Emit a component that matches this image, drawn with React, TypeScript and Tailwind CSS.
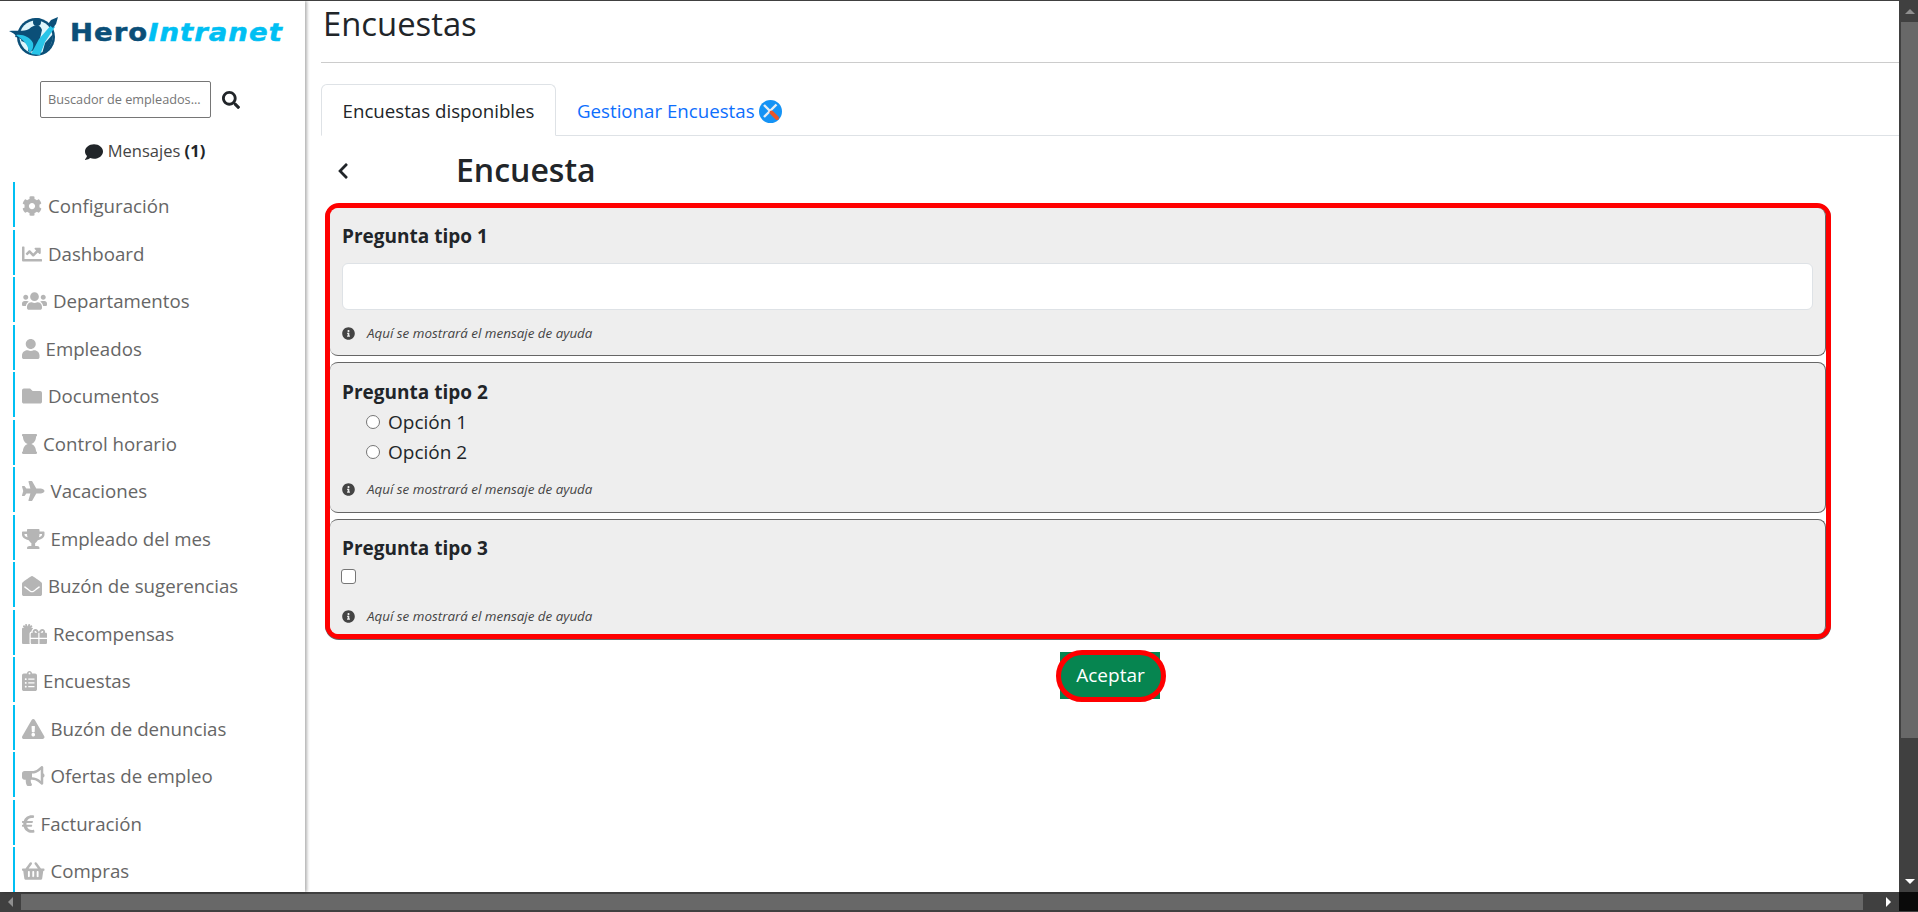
import type { IconType } from 'react-icons';
import {
  FaBullhorn, FaChartLine, FaChevronLeft, FaClipboardList, FaCog, FaComment, FaEnvelopeOpen, FaEuroSign,
  FaExclamationTriangle, FaFolder, FaGifts, FaHourglass, FaInfoCircle, FaPlane, FaSearch, FaShoppingBasket,
  FaTrophy, FaUser, FaUsers,
} from 'react-icons/fa';

const menu: { label: string; icon: IconType; width: string }[] = [
  { label: 'Configuración', icon: FaCog, width: 'w-[20px]' },
  { label: 'Dashboard', icon: FaChartLine, width: 'w-[20px]' },
  { label: 'Departamentos', icon: FaUsers, width: 'w-[25px]' },
  { label: 'Empleados', icon: FaUser, width: 'w-[17.5px]' },
  { label: 'Documentos', icon: FaFolder, width: 'w-[20px]' },
  { label: 'Control horario', icon: FaHourglass, width: 'w-[15px]' },
  { label: 'Vacaciones', icon: FaPlane, width: 'w-[22.5px]' },
  { label: 'Empleado del mes', icon: FaTrophy, width: 'w-[22.5px]' },
  { label: 'Buzón de sugerencias', icon: FaEnvelopeOpen, width: 'w-[20px]' },
  { label: 'Recompensas', icon: FaGifts, width: 'w-[25px]' },
  { label: 'Encuestas', icon: FaClipboardList, width: 'w-[15px]' },
  { label: 'Buzón de denuncias', icon: FaExclamationTriangle, width: 'w-[22.5px]' },
  { label: 'Ofertas de empleo', icon: FaBullhorn, width: 'w-[22.5px]' },
  { label: 'Facturación', icon: FaEuroSign, width: 'w-[12.5px]' },
  { label: 'Compras', icon: FaShoppingBasket, width: 'w-[22.5px]' },
];

function Logo() {
  return (
    <svg width="50" height="42" viewBox="0 0 50 42" className="shrink-0">
      <circle cx="27" cy="22" r="19" fill="#0b4f78" />
      <circle cx="27" cy="22" r="16.5" fill="#dff5fb" />
      <path d="M0 16 C8 15 14 17 20 14 C26 9 31 9 33 15 L30 28 C27 35 22 38 19 36 C21 31 17 27 12 26 C14 25 10 22 6 22 C8 20 4 18 0 16Z" fill="#0b4f78" />
      <path d="M7 20 C14 19 21 22 24 28 C25 33 23 36 20 38 C20 31 15 25 7 20Z" fill="#28c4e8" />
      <path d="M22 39 L30 24 L43 9 L46 12 L36 27 L31 40Z" fill="#28c4e8" />
      <path d="M36 28 L44 19 C44 28 40 35 33 39Z" fill="#0b4f78" />
      <path d="M42 5 L49 2 L47 9 L44 13 L39 9Z" fill="#0b4f78" />
      <circle cx="28" cy="7" r="4" fill="#0b4f78" />
    </svg>
  );
}

function ToolsIcon() {
  return (
    <svg width="23" height="23" viewBox="0 0 23 23" className="shrink-0">
      <circle cx="11.5" cy="11.5" r="11.5" fill="#1593f5" />
      <path d="M5 5 L17 17" stroke="#e6eef5" strokeWidth="2.4" />
      <path d="M17.5 4.5 L5 17" stroke="#e6eef5" strokeWidth="2.4" />
      <path d="M12.5 12.5 L18 18" stroke="#e8562a" strokeWidth="4" strokeLinecap="round" />
    </svg>
  );
}

function HelpText() {
  return (
    <div className="flex items-center gap-[12px] text-[13.4px] italic leading-[18px] text-[#444]">
      <FaInfoCircle className="h-[13px] w-[13px] text-[#444]" />
      <span>Aquí se mostrará el mensaje de ayuda</span>
    </div>
  );
}

function Sidebar() {
  return (
    <aside className="z-10 flex w-[305px] shrink-0 flex-col overflow-hidden bg-white shadow-[2px_0_3px_rgba(0,0,0,0.3)]">
      <div className="flex h-[60px] items-start pl-[9px] pt-[14px]">
        <Logo />
        <span className="ml-[11px] mt-[2px] origin-left scale-x-[1.145] whitespace-nowrap text-[24px] font-bold leading-[32px] tracking-[0.9px] [-webkit-text-stroke:0.5px] [font-family:'DejaVu_Sans',sans-serif]">
          <span className="text-[#0b4f78]">Hero</span>
          <span className="italic text-[#00bff3]">Intranet</span>
        </span>
      </div>
      <div className="mt-[20px] flex items-center pl-[40px]">
        <div className="flex h-[37px] w-[171px] items-center rounded-[2px] border border-[#767676] pl-[7px] pt-[1px] text-[12.7px] text-[#757575]">
          Buscador de empleados...
        </div>
        <FaSearch className="ml-[11px] h-[18px] w-[18px] text-[#212529]" />
      </div>
      <div className="mt-[20px] flex h-[27px] items-center justify-center pr-[15px] text-[16.5px] text-[#444]">
        <FaComment className="mr-[5px] h-[18px] w-[18px] text-[#212529]" />
        <span>Mensajes&nbsp;</span>
        <span className="font-bold text-[#212529]">(1)</span>
      </div>
      <nav className="mt-[17px] flex flex-col gap-[2.5px] pl-[13px]">
        {menu.map((item) => {
          const Icon = item.icon;
          return (
            <div key={item.label} className="flex h-[45px] shrink-0 items-center gap-[6px] border-l-2 border-[#00bff3] pl-[7px] pt-[3px] text-[18.7px] text-[#666]">
              <Icon className={`h-[20px] shrink-0 text-[#b5b5b5] ${item.width}`} />
              <span className="whitespace-nowrap pt-[1px]">{item.label}</span>
            </div>
          );
        })}
      </nav>
    </aside>
  );
}

function Content() {
  return (
    <main className="min-w-0 flex-1 bg-white pl-[16px] text-[#212529]">
      <div className="flex h-[62px] items-start border-b-[1px] border-[#ccc] pb-0">
        <h1 className="pl-[2px] pt-[3px] text-[32.8px] font-medium leading-[40px]">Encuestas</h1>
      </div>
      <div className="mt-[21px] flex h-[52px] border-b border-[#dee2e6] pt-[1px] text-[18.7px]">
        <div className="-mt-[1px] flex h-[52px] w-[235px] items-center justify-center rounded-t-[6px] border border-b-white border-[#dee2e6] bg-white pt-[3px]">
          Encuestas disponibles
        </div>
        <div className="flex items-center gap-[4px] pl-[21px] pt-[2px] text-[#0d6efd]">
          Gestionar Encuestas
          <ToolsIcon />
        </div>
      </div>
      <div className="flex h-[67px] items-center">
        <FaChevronLeft className="ml-[13px] mt-[3px] h-[18px] w-[18px]" />
        <h2 className="ml-[104px] text-[32px] font-semibold leading-[40px]">Encuesta</h2>
      </div>
      <div className="ml-[4px] flex w-[1506px] flex-col gap-[6px] rounded-[14px] border-[5px] border-[#f00] bg-white shadow-[0_1px_0_#666]">
        <section className="h-[148px] rounded-[8px] border-r border-b border-[#666] bg-[#eee] px-[12px] pt-[14px]">
          <h3 className="text-[19px] font-bold leading-[28px]">Pregunta tipo 1</h3>
          <div className="mt-[13px] h-[47px] w-[1471px] rounded-[6px] border border-[#dee2e6] bg-white" />
          <div className="mt-[14px]">
            <HelpText />
          </div>
        </section>
        <section className="h-[151px] rounded-[8px] border-y border-r border-[#666] bg-[#eee] px-[12px] pt-[15px]">
          <h3 className="text-[19px] font-bold leading-[28px]">Pregunta tipo 2</h3>
          <div className="mt-[1px] flex h-[30px] items-center gap-[8px] pl-[24px] text-[19px]">
            <span className="h-[14px] w-[14px] rounded-full border border-[#767676] bg-white" />
            Opción 1
          </div>
          <div className="flex h-[30px] items-center gap-[8px] pl-[24px] text-[19px]">
            <span className="h-[14px] w-[14px] rounded-full border border-[#767676] bg-white" />
            Opción 2
          </div>
          <div className="mt-[13px]">
            <HelpText />
          </div>
        </section>
        <section className="h-[115px] rounded-[8px] border-t border-r border-[#666] bg-[#eee] px-[12px] pt-[14px]">
          <h3 className="text-[19px] font-bold leading-[28px]">Pregunta tipo 3</h3>
          <div className="-ml-[1px] mt-[7px] h-[15px] w-[15px] rounded-[3px] border border-[#767676] bg-white" />
          <div className="mt-[23px]">
            <HelpText />
          </div>
        </section>
      </div>
      <div className="ml-[739px] mt-[13px] flex h-[47px] w-[100px] items-center justify-center bg-[#068550]">
        <button className="ml-[1px] flex h-[52px] w-[110px] shrink-0 items-center justify-center rounded-full border-[5px] border-[#f00] bg-[#068550] text-[19px] text-white">
          Aceptar
        </button>
      </div>
    </main>
  );
}

function VerticalScrollbar() {
  return (
    <div className="flex h-[891px] w-[19px] shrink-0 flex-col items-end bg-[#404040]">
      <div className="flex h-[21px] w-full items-center justify-center pl-[2px]">
        <span className="h-0 w-0 border-x-[5px] border-b-[5px] border-x-transparent border-b-[#8f8f8f]" />
      </div>
      <div className="h-[716px] w-[17px] bg-[#686868]" />
      <div className="flex flex-1 items-end justify-center self-stretch pb-[8px] pl-[2px]">
        <span className="h-0 w-0 border-x-[5px] border-t-[5px] border-x-transparent border-t-white" />
      </div>
    </div>
  );
}

function HorizontalScrollbar() {
  return (
    <div className="flex h-[19px] shrink-0 items-center bg-[#404040]">
      <div className="flex w-[21px] shrink-0 justify-center">
        <span className="h-0 w-0 border-y-[5px] border-r-[5px] border-y-transparent border-r-[#8f8f8f]" />
      </div>
      <div className="h-[16px] w-[1842px] bg-[#686868]" />
      <div className="flex flex-1 justify-end pr-[8px]">
        <span className="h-0 w-0 border-y-[5px] border-l-[5px] border-y-transparent border-l-white" />
      </div>
      <div className="h-full w-[19px] shrink-0 bg-[#0a0a0a]" />
    </div>
  );
}

export default function App() {
  return (
    <div className="flex h-[912px] w-[1918px] flex-col overflow-hidden border-t border-[#404040] bg-[#404040] [font-family:'Open_Sans',sans-serif]">
      <div className="flex h-[891px] shrink-0">
        <Sidebar />
        <Content />
        <VerticalScrollbar />
      </div>
      <HorizontalScrollbar />
    </div>
  );
}
